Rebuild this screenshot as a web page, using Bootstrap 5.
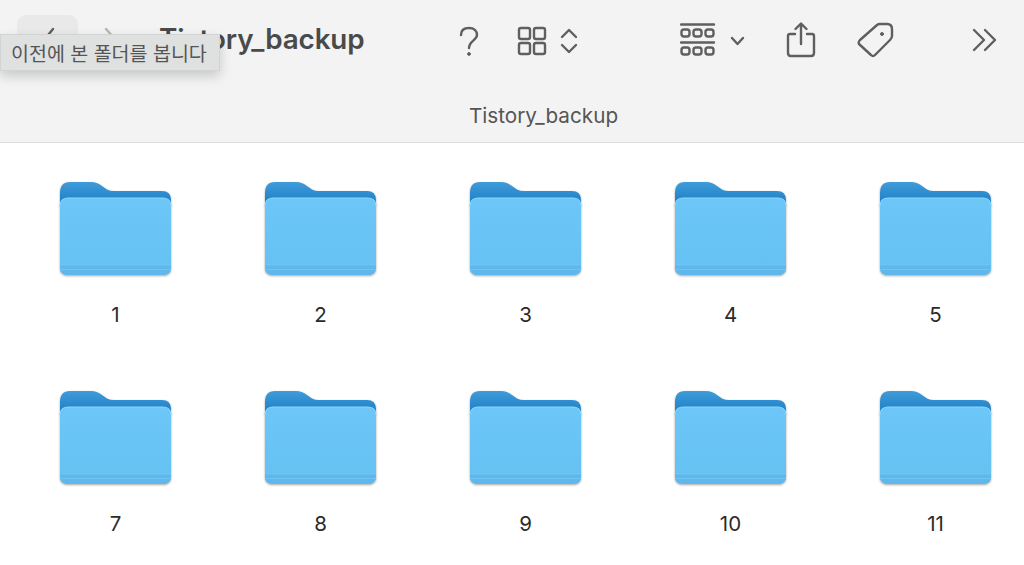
<!DOCTYPE html>
<html lang="ko">
<head>
    <meta charset="UTF-8">
    <meta name="viewport" content="width=device-width, initial-scale=1.0">
    <title>Tistory_backup</title>
    <link href="https://cdn.jsdelivr.net/npm/bootstrap@5.3.3/dist/css/bootstrap.min.css" rel="stylesheet">
    <style>
        html, body { height: 100%; overflow: hidden; }
        body { background: #fff; font-family: Inter, "Noto Sans", sans-serif; color: #2a2a2a; }
        .finder-head { height: 143px; background: #f3f3f3; border-bottom: 1px solid #dcdcdc; }
        .tool-row { height: 80px; padding-left: 17px; }
        .tool-row svg { flex: none; display: block; fill: none; stroke: #5f5f5f; stroke-width: 2.4; stroke-linecap: round; stroke-linejoin: round; }
        .back-btn { width: 61px; height: 50px; background: #e9e9e9; border-radius: 9px; }
        .win-title { font-size: 27.8px; font-weight: 600; color: #4a4a4a; line-height: 1; margin-left: 41px; width: 205px; white-space: nowrap; letter-spacing: -.1px; }
        .path-label { padding-left: 469px; margin-top: 24px; font-size: 20.7px; line-height: 24px; color: #555; white-space: nowrap; }
        .hint-box { position: absolute; left: 0; top: 34px; width: 220px; height: 37px; background: #dfe0e0; border: 1px solid #d2d3d3; box-shadow: 0 5px 12px rgba(0,0,0,.18); color: #555; font-family: "Noto Sans CJK KR", sans-serif; font-size: 19.5px; line-height: 35px; padding-left: 10px; white-space: nowrap; }
        .folder-grid { display: grid; grid-template-columns: repeat(5, 205px); row-gap: 63px; padding: 38px 0 0 13px; }
        .folder-item { text-align: center; }
        .folder-item svg { display: block; margin: 0 auto; filter: drop-shadow(0 1px 1px rgba(0,0,0,.35)); }
        .folder-name { font-size: 20.5px; line-height: 24px; margin-top: 25px; color: #2b2b2b; }
    </style>
</head>
<body class="position-relative">
    <svg width="0" height="0" class="position-absolute">
        <defs>
            <linearGradient id="frontFill" x1="0" y1="0" x2="0" y2="1">
                <stop offset="0" stop-color="#6cc7f8"/>
                <stop offset="1" stop-color="#66c1f3"/>
            </linearGradient>
            <linearGradient id="backFill" x1="0" y1="0" x2="0" y2="1">
                <stop offset="0" stop-color="#409cda"/>
                <stop offset=".45" stop-color="#2384c9"/>
                <stop offset="1" stop-color="#2384c9"/>
            </linearGradient>
            <symbol id="folderIcon" viewBox="0 0 113 97">
                <!-- back with tab -->
                <path d="M1 12 Q1 1 11 1 H32 Q38 1 43 5 L48 8.5 Q51 10 55 10 H103 Q112 10 112 19 V40 H1 Z" fill="url(#backFill)"/>
                <!-- front -->
                <path d="M1 25 Q1 17 9 17 H104 Q112 17 112 25 V86 Q112 94 104 94 H9 Q1 94 1 86 Z" fill="url(#frontFill)"/>
                <path d="M1 25 Q1 17 9 17 H104 Q112 17 112 25" fill="none" stroke="#8fd6fb" stroke-width="1"/>
                <path d="M1 84 H112 V86 Q112 94 104 94 H9 Q1 94 1 86 Z" fill="#5fb7ec"/>
                <path d="M1 84 H112 M1 88.5 H112" stroke="#74c6f4" stroke-width=".8"/>
            </symbol>
        </defs>
    </svg>

    <header class="finder-head">
        <div class="tool-row d-flex align-items-center">
            <div class="back-btn d-flex align-items-center flex-shrink-0">
                <svg width="61" height="36" viewBox="17 22 61 36"><path d="M53 29 L44 40 L53 51"/></svg>
            </div>
            <svg class="ms-4" width="16" height="36" viewBox="102 22 16 36" style="stroke:#b5b5b5"><path d="M106 29 L116 40 L106 51"/></svg>
            <div class="win-title flex-shrink-0">Tistory_backup</div>
            <svg style="margin-left:95px" width="20" height="36" viewBox="460 22 20 36"><path d="M462 35 C462 30 465 28 470 28 C475 28 478 31 478 35 C478 40 470 41 470 48"/><circle cx="470" cy="54" r="1.4" fill="#5f5f5f" stroke-width="1"/></svg>
            <svg style="margin-left:38px" width="30" height="36" viewBox="517 22 30 36"><rect x="519" y="28" width="11" height="11" rx="2"/><rect x="534" y="28" width="11" height="11" rx="2"/><rect x="519" y="43" width="11" height="11" rx="2"/><rect x="534" y="43" width="11" height="11" rx="2"/></svg>
            <svg style="margin-left:13px" width="18" height="36" viewBox="560 22 18 36"><path d="M562 37 L569 30 L576 37 M562 45 L569 52 L576 45"/></svg>
            <svg style="margin-left:102px" width="36" height="36" viewBox="680 22 36 36"><path d="M681 24.5 H714 M681 42.5 H714"/><rect x="681.5" y="29.5" width="8" height="7" rx="2.5"/><rect x="693.5" y="29.5" width="8" height="7" rx="2.5"/><rect x="705.5" y="29.5" width="8" height="7" rx="2.5"/><rect x="681.5" y="47.5" width="8" height="7" rx="2.5"/><rect x="693.5" y="47.5" width="8" height="7" rx="2.5"/><rect x="705.5" y="47.5" width="8" height="7" rx="2.5"/></svg>
            <svg style="margin-left:13px" width="17" height="36" viewBox="728 22 17 36"><path d="M731 38 L736.5 44 L742 38"/></svg>
            <svg style="margin-left:40px" width="30" height="38" viewBox="786 20 30 38"><path d="M795 33 H790 Q788 33 788 35 V52 Q788 55 791 55 H811 Q814 55 814 52 V35 Q814 33 812 33 H807 M801 43 V23 M795.5 28 L801 22.5 L806.5 28"/></svg>
            <svg style="margin-left:41px" width="38" height="38" viewBox="856 21 38 38"><path d="M858 44 Q857 42 859 40 L876 25 Q877 24 879 24 H886 Q891 24 891 29 V36 Q891 38 889 40 L874 55 Q872 57 870 55 Z"/><circle cx="881" cy="34" r="1.5" fill="#5f5f5f" stroke-width="1"/></svg>
            <svg style="margin-left:77px" width="26" height="26" viewBox="971 29 26 26"><path d="M973 32 L983 42 L973 52 M984 32 L994 42 L984 52"/></svg>
        </div>
        <div class="path-label">Tistory_backup</div>
    </header>

    <div class="hint-box">이전에 본 폴더를 봅니다</div>

    <main class="folder-grid">
        <div class="folder-item"><svg width="113" height="97"><use href="#folderIcon"/></svg><div class="folder-name">1</div></div>
        <div class="folder-item"><svg width="113" height="97"><use href="#folderIcon"/></svg><div class="folder-name">2</div></div>
        <div class="folder-item"><svg width="113" height="97"><use href="#folderIcon"/></svg><div class="folder-name">3</div></div>
        <div class="folder-item"><svg width="113" height="97"><use href="#folderIcon"/></svg><div class="folder-name">4</div></div>
        <div class="folder-item"><svg width="113" height="97"><use href="#folderIcon"/></svg><div class="folder-name">5</div></div>
        <div class="folder-item"><svg width="113" height="97"><use href="#folderIcon"/></svg><div class="folder-name">7</div></div>
        <div class="folder-item"><svg width="113" height="97"><use href="#folderIcon"/></svg><div class="folder-name">8</div></div>
        <div class="folder-item"><svg width="113" height="97"><use href="#folderIcon"/></svg><div class="folder-name">9</div></div>
        <div class="folder-item"><svg width="113" height="97"><use href="#folderIcon"/></svg><div class="folder-name">10</div></div>
        <div class="folder-item"><svg width="113" height="97"><use href="#folderIcon"/></svg><div class="folder-name">11</div></div>
    </main>

    <script src="https://cdn.jsdelivr.net/npm/bootstrap@5.3.3/dist/js/bootstrap.bundle.min.js"></script>
</body>
</html>
